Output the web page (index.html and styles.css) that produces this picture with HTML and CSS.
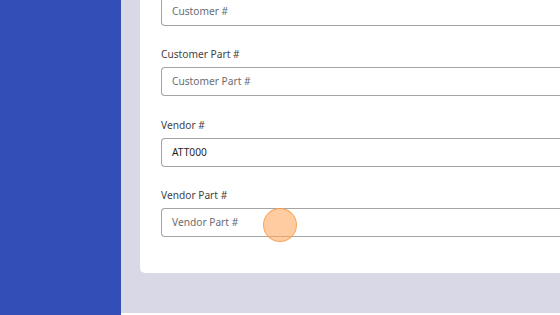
FILE: index.html
```html
<!DOCTYPE html>
<html>
<head>
<meta charset="utf-8">
<link rel="stylesheet" href="styles.css">
</head>
<body>
<div class="app">
  <aside class="sidebar"></aside>
  <main class="main">
    <section class="card">
      <div class="field">
        <div class="input placeholder">Customer #</div>
      </div>
      <div class="field">
        <label class="label">Customer Part #</label>
        <div class="input placeholder">Customer Part #</div>
      </div>
      <div class="field">
        <label class="label">Vendor #</label>
        <div class="input value">ATT000</div>
      </div>
      <div class="field">
        <label class="label">Vendor Part #</label>
        <div class="input placeholder">Vendor Part #</div>
      </div>
    </section>
  </main>
</div>
<div class="cursor"></div>
</body>
</html>
```
FILE: styles.css
```css
html, body {
  margin: 0;
  padding: 0;
  width: 560px;
  height: 315px;
  overflow: hidden;
  background: #ffffff;
  font-family: "Noto Sans", "Open Sans", sans-serif;
}
.app {
  display: flex;
  height: 315px;
}
.sidebar {
  width: 121px;
  flex: none;
  background: #344eb8;
}
.main {
  flex: 1;
  display: flex;
  flex-direction: column;
  background: #d8d8e6;
  padding-left: 19px;
  height: 313px;
  overflow: hidden;
}
.card {
  margin-top: -24px;
  background: #ffffff;
  border-radius: 5px 0 0 5px;
  padding: 20.5px 0 36px 21px;
  display: flex;
  flex-direction: column;
  gap: 20.5px;
}
.field {
  display: flex;
  flex-direction: column;
  gap: 5px;
}
.label {
  font-size: 10.2px;
  line-height: 16px;
  height: 16px;
  color: #3f3f46;
}
.input {
  box-sizing: content-box;
  border: 1px solid #a3a3a3;
  border-right: none;
  border-radius: 4px 0 0 4px;
  padding-left: 10px;
  display: flex;
  align-items: center;
  font-size: 10.2px;
  padding-bottom: 1px;
  height: 26px;
}
.placeholder { color: #6b6b70; }
.value { color: #1f1f1f; }
.cursor {
  position: absolute;
  left: 263px;
  top: 208px;
  width: 32px;
  height: 32px;
  border-radius: 50%;
  background: rgba(255, 170, 100, 0.6);
  border: 1.5px solid rgba(245, 160, 80, 0.85);
}
```
